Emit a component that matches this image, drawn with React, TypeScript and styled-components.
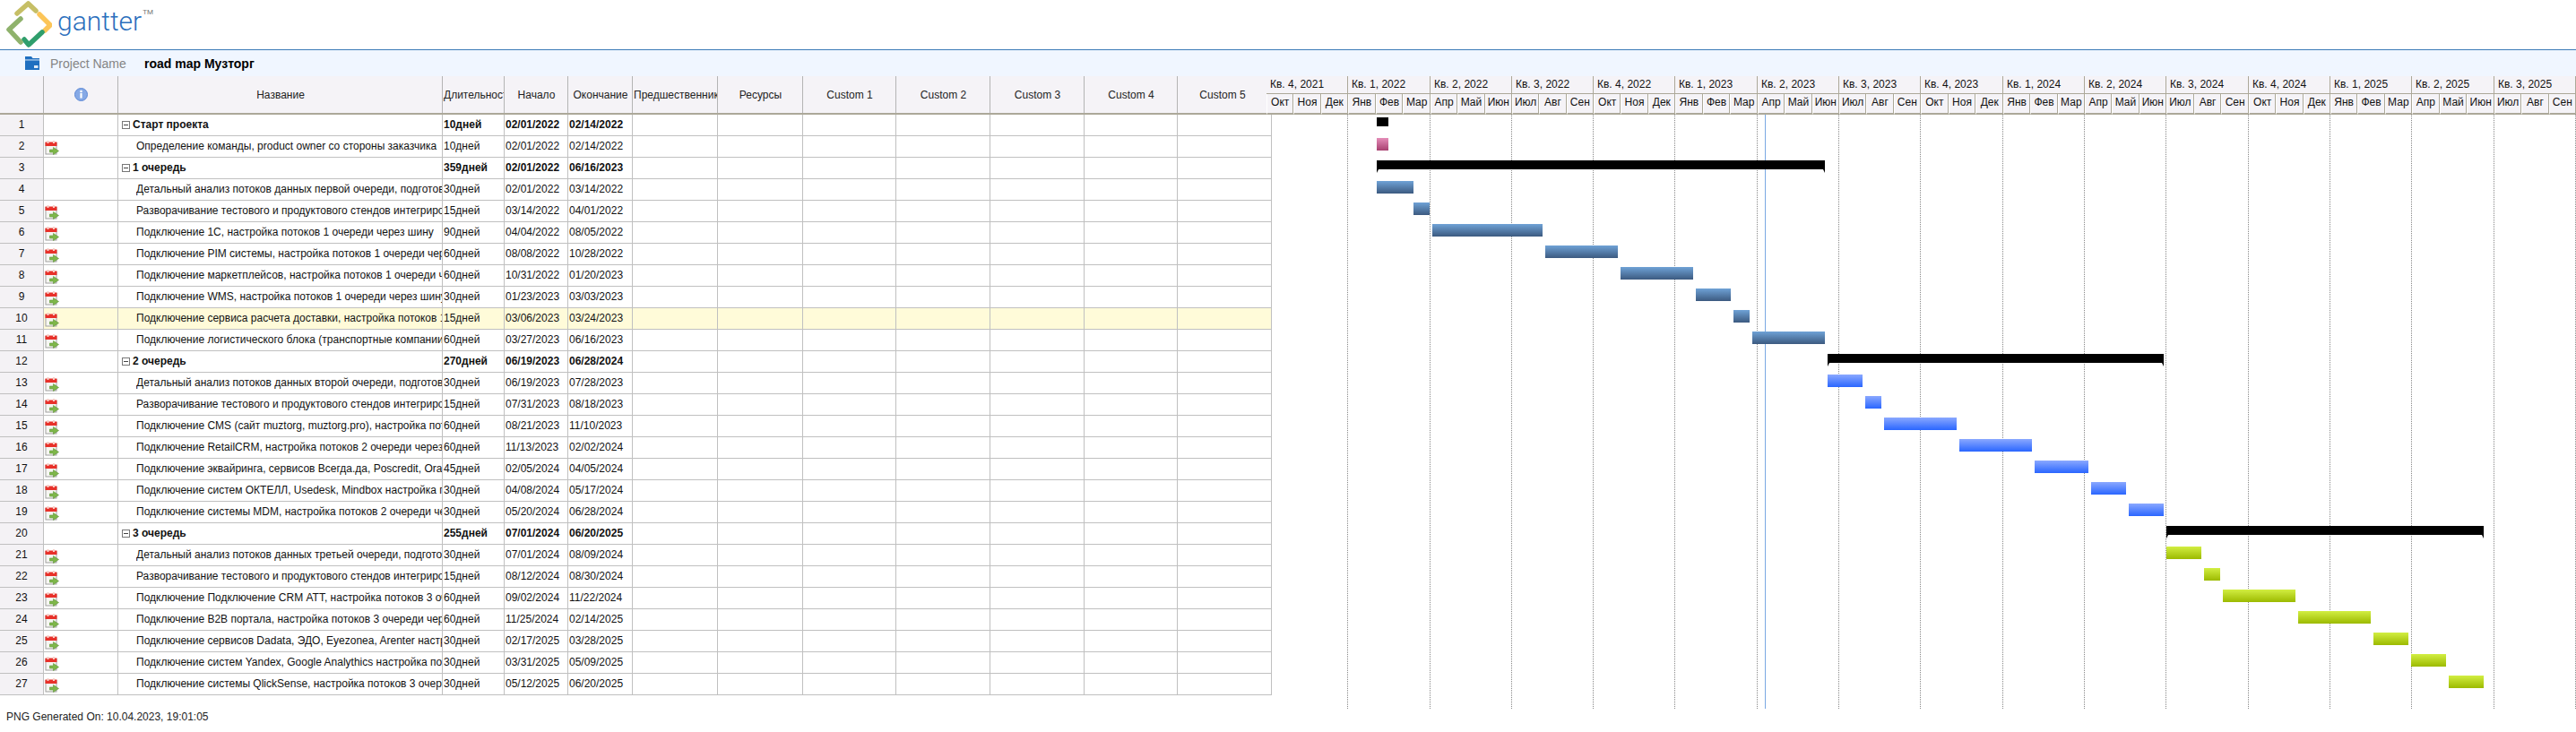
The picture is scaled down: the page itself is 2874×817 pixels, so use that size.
import styled, { createGlobalStyle } from "styled-components"

type Kind = "summary" | "pink" | "steel" | "blue" | "olive"

type Task = {
  name: string
  dur: string
  start: string
  end: string
  kind: Kind
  icon?: boolean
}

const prep = "Разворачивание тестового и продуктового стендов интегрирования"

const tasks: Task[] = [
  { name: "Старт проекта", dur: "10дней", start: "02/01/2022", end: "02/14/2022", kind: "summary" },
  { name: "Определение команды, product owner со стороны заказчика", dur: "10дней", start: "02/01/2022", end: "02/14/2022", kind: "pink", icon: true },
  { name: "1 очередь", dur: "359дней", start: "02/01/2022", end: "06/16/2023", kind: "summary" },
  { name: "Детальный анализ потоков данных первой очереди, подготовка", dur: "30дней", start: "02/01/2022", end: "03/14/2022", kind: "steel" },
  { name: prep, dur: "15дней", start: "03/14/2022", end: "04/01/2022", kind: "steel", icon: true },
  { name: "Подключение 1С, настройка потоков 1 очереди через шину", dur: "90дней", start: "04/04/2022", end: "08/05/2022", kind: "steel", icon: true },
  { name: "Подключение PIM системы, настройка потоков 1 очереди через шину", dur: "60дней", start: "08/08/2022", end: "10/28/2022", kind: "steel", icon: true },
  { name: "Подключение маркетплейсов, настройка потоков 1 очереди через шину", dur: "60дней", start: "10/31/2022", end: "01/20/2023", kind: "steel", icon: true },
  { name: "Подключение WMS, настройка потоков 1 очереди через шину", dur: "30дней", start: "01/23/2023", end: "03/03/2023", kind: "steel", icon: true },
  { name: "Подключение сервиса расчета доставки, настройка потоков 1 очереди", dur: "15дней", start: "03/06/2023", end: "03/24/2023", kind: "steel", icon: true },
  { name: "Подключение логистического блока (транспортные компании)", dur: "60дней", start: "03/27/2023", end: "06/16/2023", kind: "steel", icon: true },
  { name: "2 очередь", dur: "270дней", start: "06/19/2023", end: "06/28/2024", kind: "summary" },
  { name: "Детальный анализ потоков данных второй очереди, подготовка", dur: "30дней", start: "06/19/2023", end: "07/28/2023", kind: "blue", icon: true },
  { name: prep, dur: "15дней", start: "07/31/2023", end: "08/18/2023", kind: "blue", icon: true },
  { name: "Подключение CMS (сайт muztorg, muztorg.pro), настройка потоков", dur: "60дней", start: "08/21/2023", end: "11/10/2023", kind: "blue", icon: true },
  { name: "Подключение RetailCRM, настройка потоков 2 очереди через шину", dur: "60дней", start: "11/13/2023", end: "02/02/2024", kind: "blue", icon: true },
  { name: "Подключение эквайринга, сервисов Всегда.да, Poscredit, Orange", dur: "45дней", start: "02/05/2024", end: "04/05/2024", kind: "blue", icon: true },
  { name: "Подключение систем ОКТЕЛЛ, Usedesk, Mindbox настройка потоков", dur: "30дней", start: "04/08/2024", end: "05/17/2024", kind: "blue", icon: true },
  { name: "Подключение системы MDM, настройка потоков 2 очереди через шину", dur: "30дней", start: "05/20/2024", end: "06/28/2024", kind: "blue", icon: true },
  { name: "3 очередь", dur: "255дней", start: "07/01/2024", end: "06/20/2025", kind: "summary" },
  { name: "Детальный анализ потоков данных третьей очереди, подготовка", dur: "30дней", start: "07/01/2024", end: "08/09/2024", kind: "olive", icon: true },
  { name: prep, dur: "15дней", start: "08/12/2024", end: "08/30/2024", kind: "olive", icon: true },
  { name: "Подключение Подключение CRM АТТ, настройка потоков 3 очереди", dur: "60дней", start: "09/02/2024", end: "11/22/2024", kind: "olive", icon: true },
  { name: "Подключение B2B портала, настройка потоков 3 очереди через шину", dur: "60дней", start: "11/25/2024", end: "02/14/2025", kind: "olive", icon: true },
  { name: "Подключение сервисов Dadata, ЭДО, Eyezonea, Arenter настройка", dur: "30дней", start: "02/17/2025", end: "03/28/2025", kind: "olive", icon: true },
  { name: "Подключение систем Yandex, Google Analythics настройка потоков", dur: "30дней", start: "03/31/2025", end: "05/09/2025", kind: "olive", icon: true },
  { name: "Подключение системы QlickSense, настройка потоков 3 очереди", dur: "30дней", start: "05/12/2025", end: "06/20/2025", kind: "olive", icon: true },
]

const headers = ["", "", "Название", "Длительность", "Начало", "Окончание", "Предшественник", "Ресурсы", "Custom 1", "Custom 2", "Custom 3", "Custom 4", "Custom 5"]

// x of each quarter's right edge, the timeline itself starts at 1413
const quarterEdges = [1504, 1596, 1687, 1778, 1869, 1961, 2052, 2143, 2235, 2326, 2417, 2509, 2600, 2691, 2783, 2874]
const quarterMonths = [
  ["Янв", "Фев", "Мар"],
  ["Апр", "Май", "Июн"],
  ["Июл", "Авг", "Сен"],
  ["Окт", "Ноя", "Дек"],
]
const quarters = quarterEdges.map((edge, i) => {
  const n = (i + 3) % 4
  return {
    edge,
    width: edge - (i === 0 ? 1413 : quarterEdges[i - 1]),
    label: `Кв. ${n + 1}, ${2021 + Math.floor((i + 3) / 4)}`,
    months: quarterMonths[n],
  }
})

const CHART_X = 1419
const ROW_H = 24

// one pixel a day, counted from the first bar
const dayX = (date: string) => {
  const [m, d, y] = date.split("/").map(Number)
  return 1536 + Math.round((Date.UTC(y, m - 1, d) - Date.UTC(2022, 1, 1)) / 86400000) - CHART_X
}

const Logo = () => (
  <svg width="52" height="54" viewBox="0 0 52 54" fill="none" strokeWidth="5.5" strokeLinecap="round" strokeLinejoin="round">
    <path d="M13 15 L25.5 4 L34 12" stroke="#c6bf66" />
    <path d="M38 16 L50 28 L44 34" stroke="#fcc558" />
    <path d="M21 44 L26 50 L41 36" stroke="#2f9e6c" />
    <path d="M17 21 L4 33 L17 47" stroke="#8fb26c" />
  </svg>
)

const FolderIcon = () => (
  <svg width="16" height="15" viewBox="0 0 16 15">
    <path d="M0 0 H7 L8.5 2 H16 V3.4 H0 Z" fill="#1f6fc0" />
    <rect x="0" y="4.4" width="16" height="10.6" fill="#1f6fc0" />
    <rect x="10" y="10" width="4.5" height="3" fill="#dfeaf6" />
  </svg>
)

const InfoIcon = () => (
  <svg width="15" height="15" viewBox="0 0 15 15">
    <circle cx="7.5" cy="7.5" r="7" fill="#86a9e6" stroke="#5f8ad6" />
    <circle cx="7.5" cy="4" r="1.3" fill="#fff" />
    <rect x="6.4" y="6" width="2.2" height="5.6" fill="#fff" />
  </svg>
)

const TaskIcon = () => (
  <svg width="16" height="16" viewBox="0 0 16 16">
    <rect x="1" y="2.5" width="12" height="12.5" fill="#f6f6f2" stroke="#a0a0a0" />
    <rect x="0.5" y="1.5" width="13" height="4.5" fill="#e8312a" />
    <rect x="2.5" y="0" width="2" height="3" fill="#f6d0c8" />
    <rect x="9" y="0" width="2" height="3" fill="#f6d0c8" />
    <path d="M5.5 10 H9.5 V7.5 L15.5 11.5 L9.5 15.5 V13 H5.5 Z" fill="#7fb74a" stroke="#5d9434" strokeWidth="0.6" />
  </svg>
)

const App = () => {
  return (
    <>
      <GlobalStyle />
      <LogoBar>
        <Logo />
        <LogoText>gantter<sup>TM</sup></LogoText>
      </LogoBar>
      <ProjectBar>
        <FolderIcon />
        <ProjectLabel>Project Name</ProjectLabel>
        <ProjectName>road map Музторг</ProjectName>
      </ProjectBar>
      <HeaderRow>
        <TableHead>
          {headers.map((h, i) => (
            <HeadCell key={i}>{i === 1 ? <InfoIcon /> : h}</HeadCell>
          ))}
        </TableHead>
        <Timeline>
          {quarters.map((q) => (
            <Quarter key={q.label} $width={q.width}>
              <QuarterLabel>{q.label}</QuarterLabel>
              <MonthRow>
                {q.months.map((m) => (
                  <Month key={m}>{m}</Month>
                ))}
              </MonthRow>
            </Quarter>
          ))}
        </Timeline>
      </HeaderRow>
      <Body>
        <TaskGrid>
          {tasks.map((t, i) => {
            const group = t.kind === "summary"
            return (
              <Row key={i} $active={i === 9} $bold={group}>
                <NumCell>{i + 1}</NumCell>
                <IconCell>{t.icon && <TaskIcon />}</IconCell>
                <NameCell $group={group}>
                  {group && <Collapse />}
                  <NameText>{t.name}</NameText>
                </NameCell>
                <Cell>{t.dur}</Cell>
                <Cell>{t.start}</Cell>
                <Cell>{t.end}</Cell>
                <Cell />
                <Cell />
                <Cell />
                <Cell />
                <Cell />
                <Cell />
                <Cell />
              </Row>
            )
          })}
        </TaskGrid>
        <Chart>
          {quarterEdges.map((edge) => (
            <GridLine key={edge} style={{ left: edge - 1 - CHART_X }} />
          ))}
          <TodayLine style={{ left: dayX("04/10/2023") }} />
          {tasks.map((t, i) => {
            const left = dayX(t.start)
            const group = t.kind === "summary"
            return (
              <Bar
                key={i}
                $kind={t.kind}
                $ticks={group && i > 0}
                style={{ left, width: dayX(t.end) - left, top: i * ROW_H + (group ? 3 : 2) }}
              />
            )
          })}
        </Chart>
      </Body>
      <Footer>PNG Generated On: 10.04.2023, 19:01:05</Footer>
    </>
  )
}

export default App

const GlobalStyle = createGlobalStyle`
  html, body {
    margin: 0;
    padding: 0;
    background: #fff;
    overflow: hidden;
  }
  body {
    width: 2874px;
    height: 817px;
    font-family: "Liberation Sans", Arial, sans-serif;
    font-size: 12px;
    color: #111;
  }
  * {
    box-sizing: border-box;
  }
`

const columns = "49px 83px 362px 69px 71px 72px 95px 95px 104px 105px 105px 104px"

const LogoBar = styled.div`
  height: 56px;
  padding-left: 6px;
  display: flex;
  align-items: flex-start;
  border-bottom: 1px solid #3b7ab8;
`

const LogoText = styled.div`
  margin: 7px 0 0 6px;
  font-family: Roboto, "Liberation Sans", sans-serif;
  font-weight: 300;
  font-size: 30px;
  line-height: 34px;
  color: #2b6fbd;
  sup {
    font-size: 8px;
    font-weight: 400;
    line-height: 0;
    color: #777;
    vertical-align: 18px;
    margin-left: 1px;
  }
`

const ProjectBar = styled.div`
  height: 29px;
  padding-left: 28px;
  display: flex;
  align-items: center;
  background: #f0f6ff;
`

const ProjectLabel = styled.span`
  margin-left: 12px;
  width: 105px;
  font-size: 14px;
  color: #858585;
`

const ProjectName = styled.span`
  font-size: 14px;
  font-weight: bold;
  color: #000;
`

const HeaderRow = styled.div`
  height: 43px;
  display: flex;
`

const TableHead = styled.div`
  width: 1413px;
  display: grid;
  grid-template-columns: ${columns} 99px;
  background: #f5f3f7;
  border-bottom: 2px solid #aca899;
`

const HeadCell = styled.div`
  display: flex;
  align-items: center;
  justify-content: safe center;
  padding-left: 1px;
  overflow: hidden;
  white-space: nowrap;
  color: #222;
  border-right: 1px solid #b4b4b4;
  &:last-child {
    border-right: none;
  }
`

const Timeline = styled.div`
  flex: 1;
  display: flex;
  background: #f5f3f7;
`

const Quarter = styled.div<{ $width: number }>`
  width: ${(p) => p.$width}px;
  flex: none;
  display: flex;
  flex-direction: column;
`

const QuarterLabel = styled.div`
  height: 20px;
  padding-left: 4px;
  line-height: 19px;
  white-space: nowrap;
  border-right: 1px solid #aca899;
  border-bottom: 1px solid #aca899;
`

const MonthRow = styled.div`
  flex: 1;
  display: flex;
`

const Month = styled.div`
  flex: 1;
  text-align: center;
  line-height: 19px;
  overflow: hidden;
  white-space: nowrap;
  border-left: 1px solid #fff;
  border-right: 1px solid #aca899;
  border-bottom: 2px solid #aca899;
`

const Body = styled.div`
  display: flex;
  align-items: flex-start;
`

const TaskGrid = styled.div`
  width: 1419px;
  flex: none;
`

const Row = styled.div<{ $active: boolean; $bold: boolean }>`
  height: ${ROW_H}px;
  display: grid;
  grid-template-columns: ${columns} 105px;
  background: ${(p) => (p.$active ? "#fffbd9" : "#fff")};
  font-weight: ${(p) => (p.$bold ? "bold" : "normal")};
`

const Cell = styled.div`
  padding-left: 1px;
  line-height: 23px;
  white-space: nowrap;
  overflow: hidden;
  border-right: 1px solid #c0c0c0;
  border-bottom: 1px solid #c0c0c0;
`

const NumCell = styled(Cell)`
  padding-left: 0;
  text-align: center;
  font-weight: normal;
  background: #f4f2f5;
`

const IconCell = styled(Cell)`
  padding: 5px 0 0 1px;
  line-height: 0;
`

const NameCell = styled(Cell)<{ $group: boolean }>`
  display: flex;
  align-items: center;
  padding-left: ${(p) => (p.$group ? 4 : 20)}px;
`

const NameText = styled.span`
  flex: 1;
  min-width: 0;
  overflow: hidden;
`

const Collapse = styled.span`
  position: relative;
  flex: none;
  width: 9px;
  height: 9px;
  margin-right: 3px;
  border: 1px solid #777;
  background: #fff;
  &::after {
    content: "";
    position: absolute;
    left: 1px;
    right: 1px;
    top: 3px;
    height: 1px;
    background: #444;
  }
`

const Chart = styled.div`
  position: relative;
  flex: 1;
  height: 663px;
  overflow: hidden;
`

const GridLine = styled.div`
  position: absolute;
  top: 0;
  bottom: 0;
  border-left: 1px dotted #888;
`

const TodayLine = styled.div`
  position: absolute;
  top: 0;
  bottom: 0;
  width: 1px;
  background: #7aa8e2;
`

const barFills: Record<Kind, string> = {
  summary: "#000",
  pink: "linear-gradient(#e48cb8, #a84070)",
  steel: "linear-gradient(#6fa2d6, #3c5a80)",
  blue: "linear-gradient(#8aa8ff, #2a66ff)",
  olive: "linear-gradient(#d2ee42, #9cba00)",
}

const Bar = styled.div<{ $kind: Kind; $ticks: boolean }>`
  position: absolute;
  height: ${(p) => (p.$kind === "summary" ? 10 : 14)}px;
  background: ${(p) => barFills[p.$kind]};
  ${(p) =>
    p.$ticks &&
    `
    &::before, &::after {
      content: "";
      position: absolute;
      top: 100%;
      width: 0;
      height: 0;
      border-bottom: 4px solid transparent;
    }
    &::before {
      left: 0;
      border-left: 2px solid #000;
    }
    &::after {
      right: 0;
      border-right: 2px solid #000;
    }
  `}
`

const Footer = styled.div`
  margin-top: 2px;
  padding-left: 7px;
  line-height: 14px;
  color: #222;
`
